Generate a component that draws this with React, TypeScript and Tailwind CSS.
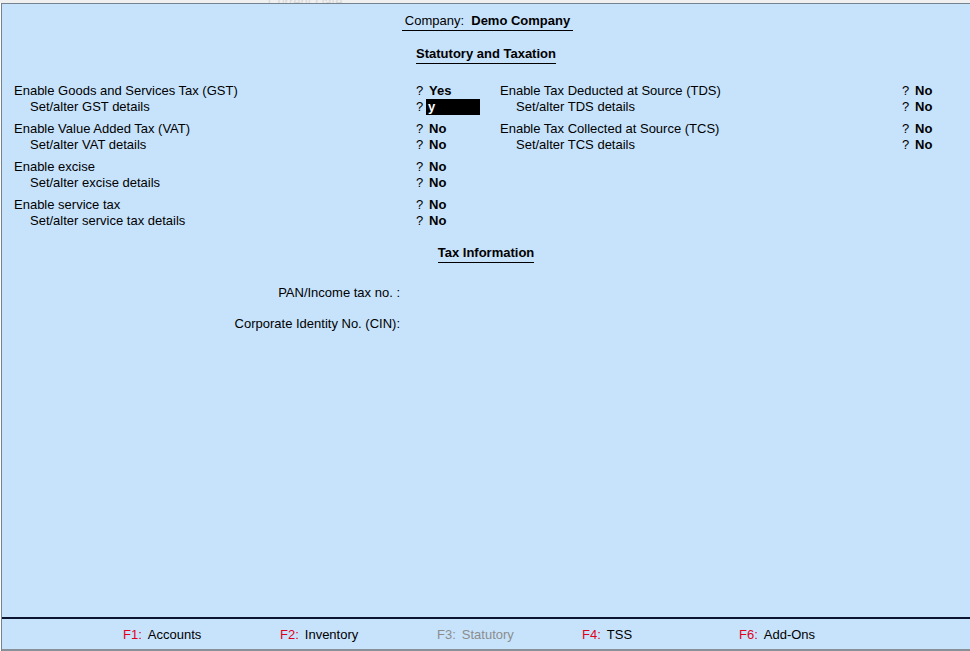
import React from "react";

type Field = { label: string; value: string; sub?: boolean; active?: boolean };

const leftGroups: Field[][] = [
  [
    { label: "Enable Goods and Services Tax (GST)", value: "Yes" },
    { label: "Set/alter GST details", value: "y", sub: true, active: true },
  ],
  [
    { label: "Enable Value Added Tax (VAT)", value: "No" },
    { label: "Set/alter VAT details", value: "No", sub: true },
  ],
  [
    { label: "Enable excise", value: "No" },
    { label: "Set/alter excise details", value: "No", sub: true },
  ],
  [
    { label: "Enable service tax", value: "No" },
    { label: "Set/alter service tax details", value: "No", sub: true },
  ],
];

const rightGroups: Field[][] = [
  [
    { label: "Enable Tax Deducted at Source (TDS)", value: "No" },
    { label: "Set/alter TDS details", value: "No", sub: true },
  ],
  [
    { label: "Enable Tax Collected at Source (TCS)", value: "No" },
    { label: "Set/alter TCS details", value: "No", sub: true },
  ],
];

const footerKeys = [
  { key: "F1:", label: "Accounts", w: "w-[157px]" },
  { key: "F2:", label: "Inventory", w: "w-[157px]" },
  { key: "F3:", label: "Statutory", w: "w-[145px]", disabled: true },
  { key: "F4:", label: "TSS", w: "w-[157px]" },
  { key: "F6:", label: "Add-Ons", w: "w-[157px]" },
];

function Row({ f }: { f: Field }) {
  return (
    <div className="flex h-4 items-center leading-4">
      <div className={`w-[402px] shrink-0 ${f.sub ? "pl-4" : ""}`}>{f.label}</div>
      <div className="w-[10px] shrink-0">?</div>
      {f.active ? (
        <div className="h-4 w-[54px] bg-black pl-[2px] font-bold text-white">{f.value}</div>
      ) : (
        <div className="pl-[3px] font-bold">{f.value}</div>
      )}
    </div>
  );
}

function Column({ groups }: { groups: Field[][] }) {
  return (
    <div className="flex flex-col gap-[6px]">
      {groups.map((g, i) => (
        <div key={i}>
          {g.map((f) => (
            <Row key={f.label} f={f} />
          ))}
        </div>
      ))}
    </div>
  );
}

export default function App() {
  return (
    <div
      className="flex h-[651px] w-[970px] flex-col overflow-hidden bg-white text-[13px] text-black"
      style={{ fontFamily: '"Liberation Sans", Arial, sans-serif' }}
    >
      {/* strip of the window behind, mostly hidden */}
      <div className="flex h-[3px] shrink-0 items-end overflow-hidden bg-[#f0f0f0] pl-[268px]">
        <div className="text-[13px] leading-[3px] text-[#d8d8d8]">Current Date</div>
      </div>

      <div className="ml-[1px] flex flex-1 flex-col border-l border-t border-[#76838f] bg-[#c7e3fc]">
        <div className="flex flex-1 flex-col">
          <div className="flex justify-center pt-[9px] pl-[3px]">
            <div className="border-b border-black px-[3px] pb-[1px] leading-4">
              Company:&nbsp; <span className="font-bold">Demo Company</span>
            </div>
          </div>

          <div className="flex justify-center pt-[15px]">
            <div className="border-b border-black pb-[1px] font-bold leading-4">Statutory and Taxation</div>
          </div>

          <div className="flex pt-[19px] pl-[12px]">
            <div className="w-[486px] shrink-0">
              <Column groups={leftGroups} />
            </div>
            <Column groups={rightGroups} />
          </div>

          <div className="flex justify-center pt-[16px]">
            <div className="border-b border-black pb-[1px] font-bold leading-4">Tax Information</div>
          </div>

          <div className="flex flex-col gap-[15px] pt-[22px]">
            <div className="w-[398px] text-right leading-4">PAN/Income tax no. :</div>
            <div className="w-[398px] text-right leading-4">Corporate Identity No. (CIN):</div>
          </div>
        </div>

        <div className="h-[2px] shrink-0 bg-[#0b1530]" />

        <div className="flex h-[30px] shrink-0 items-center pt-[2px] pl-[121px]">
          {footerKeys.map((k) => (
            <div key={k.key} className={`${k.w} shrink-0 whitespace-nowrap`}>
              <span className={k.disabled ? "text-[#8c8c8c]" : "text-[#e0001a]"}>{k.key}</span>
              <span className={k.disabled ? "ml-[6px] text-[#8c8c8c]" : "ml-[6px]"}>{k.label}</span>
            </div>
          ))}
        </div>

        <div className="h-[2px] shrink-0 bg-[#8a9097]" />
      </div>
    </div>
  );
}
